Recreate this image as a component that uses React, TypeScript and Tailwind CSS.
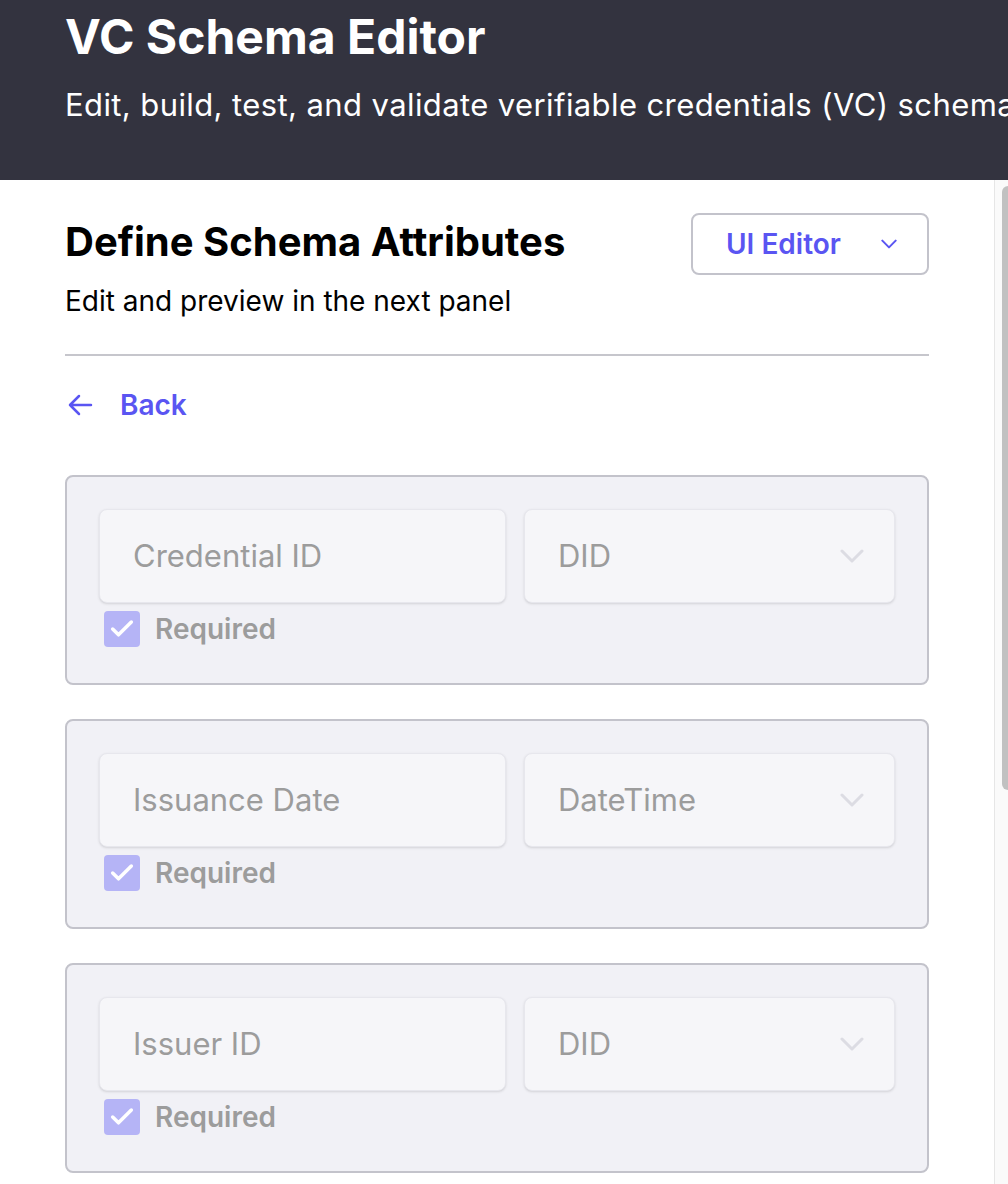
import React from "react";
import { Check } from "lucide-react";

const fields = [
  { name: "Credential ID", type: "DID" },
  { name: "Issuance Date", type: "DateTime" },
  { name: "Issuer ID", type: "DID" },
];

const Chevron = ({ className }: { className: string }) => (
  <svg className={className} viewBox="0 0 24 14" fill="none" stroke="currentColor" strokeWidth={3} strokeLinecap="round" strokeLinejoin="round">
    <polyline points="2,2 12,12 22,2" />
  </svg>
);

const AttributeCard = ({ name, type }: { name: string; type: string }) => (
  <div className="rounded-lg border-2 border-[#c3c3cb] bg-[#f1f1f6] px-[32px] pt-[32px] pb-[36px]">
    <div className="flex gap-[18px]">
      <div className="flex h-[94px] w-[407px] items-center rounded-lg border border-[#e7e7ed] bg-[#f6f6f9] px-[33px] text-[31px] text-[#9c9c9c] shadow-sm">
        {name}
      </div>
      <div className="flex h-[94px] flex-1 items-center justify-between rounded-lg border border-[#e7e7ed] bg-[#f6f6f9] pl-[33px] pr-[30px] text-[31px] text-[#9c9c9c] shadow-sm">
        <span>{type}</span>
        <Chevron className="h-[14px] w-[24px] text-[#dcdce3]" />
      </div>
    </div>
    <div className="ml-[5px] mt-[8px] flex h-[36px] items-center gap-[15px]">
      <div className="flex h-[36px] w-[36px] items-center justify-center rounded-[4px] bg-[#b5b4f6]">
        <Check className="h-[28px] w-[28px] text-white" strokeWidth={3} />
      </div>
      <span className="text-[28px] font-semibold leading-[36px] text-[#9c9c9c]">Required</span>
    </div>
  </div>
);

export default function App() {
  return (
    <div className="h-[1184px] overflow-hidden bg-white font-['Inter',sans-serif]">
      {/* header */}
      <div className="h-[180px] bg-[#33333f] px-[65px] pt-[8px] text-white">
        <h1 className="text-[48px] font-bold leading-[58px]">VC Schema Editor</h1>
        <p className="mt-[20px] whitespace-nowrap text-[31px] leading-[38px] tracking-[0.4px]">
          Edit, build, test, and validate verifiable credentials (VC) schemas with ease
        </p>
      </div>

      <div className="flex">
        <div className="w-[994px] px-[65px] pt-[33px]">
          <div className="flex items-start justify-between">
            <div>
              <h2 className="mt-[5px] text-[40px] font-bold leading-[48px] text-black">
                Define Schema Attributes
              </h2>
              <p className="mt-[18px] text-[28px] leading-[34px] text-black">
                Edit and preview in the next panel
              </p>
            </div>
            <button className="flex h-[62px] w-[238px] items-center justify-between rounded-lg border-2 border-[#c3c3cb] pl-[33px] pr-[30px] text-[28px] font-semibold text-[#5a55f2]">
              <span>UI Editor</span>
              <Chevron className="h-[10px] w-[16px]" />
            </button>
          </div>

          <div className="mt-[36px] h-[2px] bg-[#c6c6cc]" />

          <div className="mt-[32px] flex h-[34px] items-center gap-[27px] text-[#5a55f2]">
            <svg className="ml-[3px] h-[24px] w-[25px]" viewBox="0 0 25 24" fill="none" stroke="currentColor" strokeWidth={2.5} strokeLinecap="round" strokeLinejoin="round">
              <path d="M11 3 L2 12 L11 21 M2 12 H23" />
            </svg>
            <span className="text-[28px] font-semibold leading-[34px]">Back</span>
          </div>

          <div className="mt-[53px] flex flex-col gap-[34px]">
            {fields.map((f) => (
              <AttributeCard key={f.name} name={f.name} type={f.type} />
            ))}
          </div>
        </div>

        {/* scrollbar */}
        <div className="h-[1004px] w-[14px] border-l border-[#e6e6e6] bg-[#fafafa] pl-[7px] pt-[6px]">
          <div className="h-[604px] rounded-tl-[6px] rounded-bl-[6px] bg-[#c1c1c1]" />
        </div>
      </div>
    </div>
  );
}
